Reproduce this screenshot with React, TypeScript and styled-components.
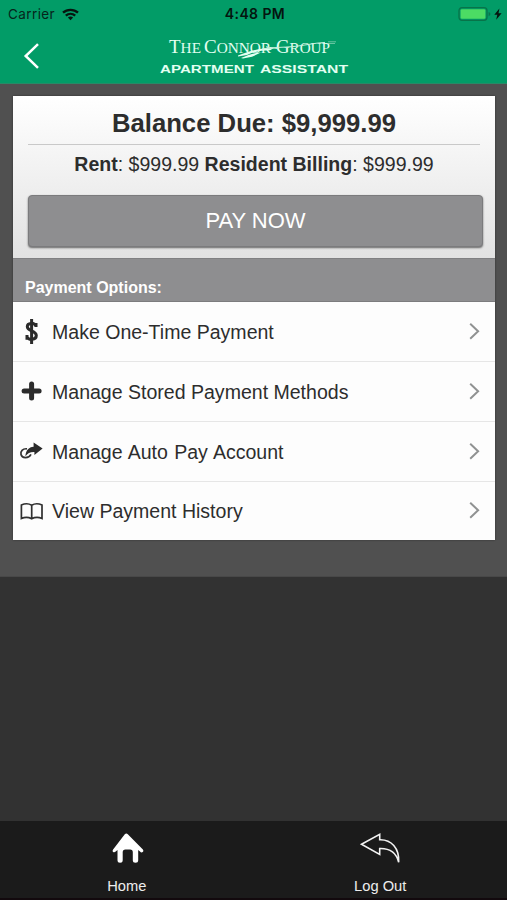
import React from "react";
import styled, { createGlobalStyle } from "styled-components";

const GlobalStyle = createGlobalStyle`
  * { box-sizing: border-box; }
  body { margin: 0; background: #323232; font-family: "Liberation Sans", Arial, sans-serif; }
  svg { display: block; flex: none; }
`;

const Screen = styled.div`
  width: 507px;
  height: 900px;
  display: flex;
  flex-direction: column;
  overflow: hidden;
  background: #323232;
  color: #2d2d2d;
`;

const Header = styled.header`
  height: 84px;
  flex: none;
  background: #029c67;
  border-bottom: 1px solid #288a67;
`;

const StatusBar = styled.div`
  height: 28px;
  display: grid;
  grid-template-columns: 1fr auto 1fr;
  align-items: center;
  padding: 0 5px 0 8px;
  font: 400 13.5px/28px Inter, sans-serif;
  letter-spacing: 0.4px;
  color: #06251b;
`;

const StatusSide = styled.div<{ $end?: boolean }>`
  display: flex;
  align-items: center;
  justify-content: ${(p) => (p.$end ? "flex-end" : "flex-start")};
  gap: ${(p) => (p.$end ? 3 : 7)}px;
`;

const Clock = styled.div`
  font-weight: 600;
  font-size: 14px;
  letter-spacing: 0.4px;
  color: #04150f;
`;

const TitleBar = styled.div`
  height: 55px;
  display: grid;
  grid-template-columns: 150px 210px 1fr;
`;

const BackButton = styled.button`
  border: 0;
  padding: 14px 0 0 22px;
  background: none;
  display: flex;
  align-items: flex-start;
`;

const Content = styled.main`
  height: 493px;
  flex: none;
  padding: 12px 12px 0 13px;
  background: #505050;
  border-bottom: 1px solid #484848;
`;

const Card = styled.section`
  height: 444px;
  background: #fdfdfd;
  box-shadow: 0 0 2px rgba(0, 0, 0, 0.4);
`;

const Summary = styled.div`
  height: 162px;
  padding: 0 15px;
  background: linear-gradient(#ffffff, #e2e2e2);
  text-align: center;
`;

const Balance = styled.h1`
  margin: 0;
  height: 49px;
  padding-top: 1px;
  border-bottom: 1px solid #c9c9c9;
  font-size: 25.7px;
  font-weight: 700;
  line-height: 52px;
`;

const Breakdown = styled.p`
  margin: 0;
  height: 50px;
  font-size: 19.55px;
  line-height: 39px;
  white-space: nowrap;
`;

const PayButton = styled.button`
  display: block;
  width: 455px;
  height: 52px;
  padding: 0;
  border: 1px solid #7b7b7d;
  border-radius: 4px;
  background: #8e8e90;
  box-shadow: 0 1px 2px rgba(0, 0, 0, 0.55);
  color: #fff;
  font: 22px/50px "Liberation Sans", Arial, sans-serif;
`;

const SectionTitle = styled.h2`
  margin: 0;
  height: 44px;
  padding: 15px 12px 0;
  background: #8e8e90;
  border-top: 1px solid #808082;
  border-bottom: 1px solid #7c7c7e;
  color: #fff;
  font-size: 16px;
  line-height: 27px;
`;

const OptionRow = styled.div`
  height: 60px;
  display: grid;
  grid-template-columns: 39px 1fr auto;
  align-items: center;
  padding-right: 14px;
  font-size: 19.55px;
  border-bottom: 1px solid #e6e6e6;

  &:last-child {
    height: 58px;
    border-bottom: 0;
  }
`;

const OptionIcon = styled.div`
  padding-left: 6px;
`;

const Label = styled.span<{ $wordGap: number }>`
  padding-top: 1px;
  word-spacing: ${(p) => p.$wordGap}px;
`;

const TabBar = styled.nav`
  height: 79px;
  margin-top: auto;
  flex: none;
  display: grid;
  grid-template-columns: 1fr 1fr;
  background: #1b1b1b;
  border-bottom: 2px solid #12090d;
`;

const Tab = styled.div`
  display: flex;
  flex-direction: column;
  align-items: center;
  padding-top: 10px;
  color: #ededed;
  font-size: 14.7px;
  line-height: 20px;
  gap: 9px;
`;

const Wifi = () => (
  <svg width="17" height="13" viewBox="0 0 17 13" fill="none" stroke="#06150f" strokeWidth="2.3">
    <path d="M1 4.7C5.2.8 11.8.8 16 4.7M3.8 7.7c2.7-2.5 6.700-2.500 9.400 0" />
    <path d="M8.5 12.200 5.900 9.600q2.600-2 5.200 0z" fill="#06150f" stroke="none" />
  </svg>
);

const Battery = () => (
  <svg width="33" height="14" viewBox="0 0 33 14">
    <rect x="1" y=".7" width="28" height="12.6" rx="3" fill="none" stroke="#087349" strokeWidth="1.3" />
    <rect x="2.6" y="2.2" width="24.8" height="9.6" rx="1.4" fill="#4cdc64" />
    <path d="M30.6 5v4.2q1.8-.5 1.8-2.1T30.6 5z" fill="#087349" />
  </svg>
);

const Bolt = () => (
  <svg width="8" height="12" viewBox="0 0 8 12">
    <path d="M5.4.4.3 6.8h3L2.2 11.7l5.4-6.5H4.5z" fill="#06150f" />
  </svg>
);

const Logo = () => (
  <svg width="210" height="54" viewBox="0 0 210 54" fill="#e3fff1">
    <g fontFamily="'Liberation Serif', serif">
      <text x="19" y="24.500" fontSize="18" textLength="32" lengthAdjust="spacingAndGlyphs">
        T<tspan fontSize="14.5">HE</tspan>
      </text>
      <text x="54" y="24.500" fontSize="18" textLength="67" lengthAdjust="spacingAndGlyphs">
        C<tspan fontSize="14.5">ONNOR</tspan>
      </text>
      <text x="126" y="24.500" fontSize="18" textLength="54" lengthAdjust="spacingAndGlyphs">
        G<tspan fontSize="14.5">ROUP</tspan>
      </text>
    </g>
    <path d="M88 27.500c12-4.500 21-7.500 36-7.500l-4 2.200c-9 0-15 1.500-23 4.800l-9 1.500z" />
    <path d="M91 30c7-2.500 11-5 20-5.400l-9 4.200-9 1.600z" />
    <path d="M112 21c12-1.800 20-1.500 31-2.400 11-1 21-3.600 32-4.200M116 18.800l11 1.700" fill="none" stroke="#c6f0dd" strokeWidth="1" />
    <path d="M178 13.800h8M178 15.500h7" stroke="#a9dfc7" strokeWidth=".6" />
    <g fontFamily="'Liberation Sans', sans-serif" fontWeight="700" fontSize="11.6">
      <text x="10" y="45" textLength="94" lengthAdjust="spacingAndGlyphs">
        APARTMENT
      </text>
      <text x="110" y="45" textLength="88" lengthAdjust="spacingAndGlyphs">
        ASSISTANT
      </text>
    </g>
  </svg>
);

const DollarIcon = () => (
  <svg width="25" height="30" viewBox="0 0 25 30" fill="none" stroke="#2b2b2b">
    <path d="M12.600 2v25" strokeWidth="3" />
    <path
      d="M17 10V6M17 9C15.300 5.300 8.300 5.500 8.300 9.700c0 4.600 9 3.800 9 8.900 0 4.600-7.700 4.800-9.400 1.200M8 18v4.800"
      strokeWidth="3"
    />
  </svg>
);

const PlusIcon = () => (
  <svg width="25" height="24" viewBox="0 0 25 24">
    <path d="M12.600 4v14M5.100 11h15" stroke="#2b2b2b" strokeWidth="5" strokeLinecap="round" />
  </svg>
);

const ShareIcon = () => (
  <svg width="25" height="22" viewBox="0 0 25 22">
    <path d="M8 7.800C3.500 7.400 1.300 10.500 2 13.500c.9 3.900 7.400 4.600 10-.2" fill="none" stroke="#333" strokeWidth="1.700" />
    <path d="M14.600 1.500 23.600 7.500l-8.200 6.400v-3c-4-.2-6.900 1.200-9 4.400.3-5.800 3.300-9.200 8.200-9.600z" fill="#2b2b2b" />
  </svg>
);

const BookIcon = () => (
  <svg width="25" height="20" viewBox="0 0 25 20" fill="none" stroke="#303030" strokeWidth="1.700">
    <path d="M12.700 4.200C9.700 2.400 5.700 2.500 2.400 4v13.500c3.300-1.400 7-1.400 10.300.2 3.300-1.600 7-1.600 10.300-.2V4c-3.300-1.500-7.300-1.600-10.300.2zM12.700 4.200v13.500" />
  </svg>
);

const Chevron = () => (
  <svg width="13" height="22" viewBox="0 0 13 22">
    <path d="m2.200 2.700 7.900 7.500-7.900 7.500" fill="none" stroke="#909292" strokeWidth="2" />
  </svg>
);

const HomeIcon = () => (
  <svg width="42" height="36" viewBox="0 0 42 36">
    <path
      d="M20.300 2.500q.8 0 1.500.7l15.100 15.300q1.200 1.700-.2 2.600-1.500.8-2.700-.6l-1.800-1.500v10.300q0 2.500-2.700 2.500t-2.700-2.500v-8q0-2.700-2.700-2.700h-4.700q-2.700 0-2.700 2.700v8q0 2.500-2.600 2.500t-2.600-2.500V19.100l-1.800 1.500q-1.300 1.200-2.600.3-1.200-1 0-2.500L18.800 3.200q.7-.7 1.500-.7z"
      fill="#fff"
    />
  </svg>
);

const LogoutIcon = () => (
  <svg width="42" height="36" viewBox="0 0 42 36">
    <path
      d="M2.500 13.300 20.700 3.300v5.400c11.500-.4 19.700 8.300 19 22.500-2.300-9-9-14-19-13.700v6z"
      fill="none"
      stroke="#f2f2f2"
      strokeWidth="1.600"
      strokeLinejoin="miter"
    />
  </svg>
);

const options = [
  { label: "Make One-Time Payment", Icon: DollarIcon, wordGap: 0 },
  { label: "Manage Stored Payment Methods", Icon: PlusIcon, wordGap: 0 },
  { label: "Manage Auto Pay Account", Icon: ShareIcon, wordGap: 0.8 },
  { label: "View Payment History", Icon: BookIcon, wordGap: 0 },
];

export default function App() {
  return (
    <>
      <GlobalStyle />
      <Screen>
        <Header>
          <StatusBar>
            <StatusSide>
              <span>Carrier</span>
              <Wifi />
            </StatusSide>
            <Clock>4:48 PM</Clock>
            <StatusSide $end>
              <Battery />
              <Bolt />
            </StatusSide>
          </StatusBar>
          <TitleBar>
            <BackButton aria-label="Back">
              <svg width="20" height="28" viewBox="0 0 20 28">
                <path d="M16 2.200 3.700 14 16 25.800" fill="none" stroke="#fff" strokeWidth="2.500" />
              </svg>
            </BackButton>
            <Logo />
          </TitleBar>
        </Header>
        <Content>
          <Card>
            <Summary>
              <Balance>Balance Due: $9,999.99</Balance>
              <Breakdown>
                <b>Rent</b>: $999.99 <b>Resident Billing</b>: $999.99
              </Breakdown>
              <PayButton>PAY NOW</PayButton>
            </Summary>
            <SectionTitle>Payment Options:</SectionTitle>
            {options.map(({ label, Icon, wordGap }) => (
              <OptionRow key={label}>
                <OptionIcon>
                  <Icon />
                </OptionIcon>
                <Label $wordGap={wordGap}>{label}</Label>
                <Chevron />
              </OptionRow>
            ))}
          </Card>
        </Content>
        <TabBar>
          <Tab>
            <HomeIcon />
            <span>Home</span>
          </Tab>
          <Tab>
            <LogoutIcon />
            <span>Log Out</span>
          </Tab>
        </TabBar>
      </Screen>
    </>
  );
}
